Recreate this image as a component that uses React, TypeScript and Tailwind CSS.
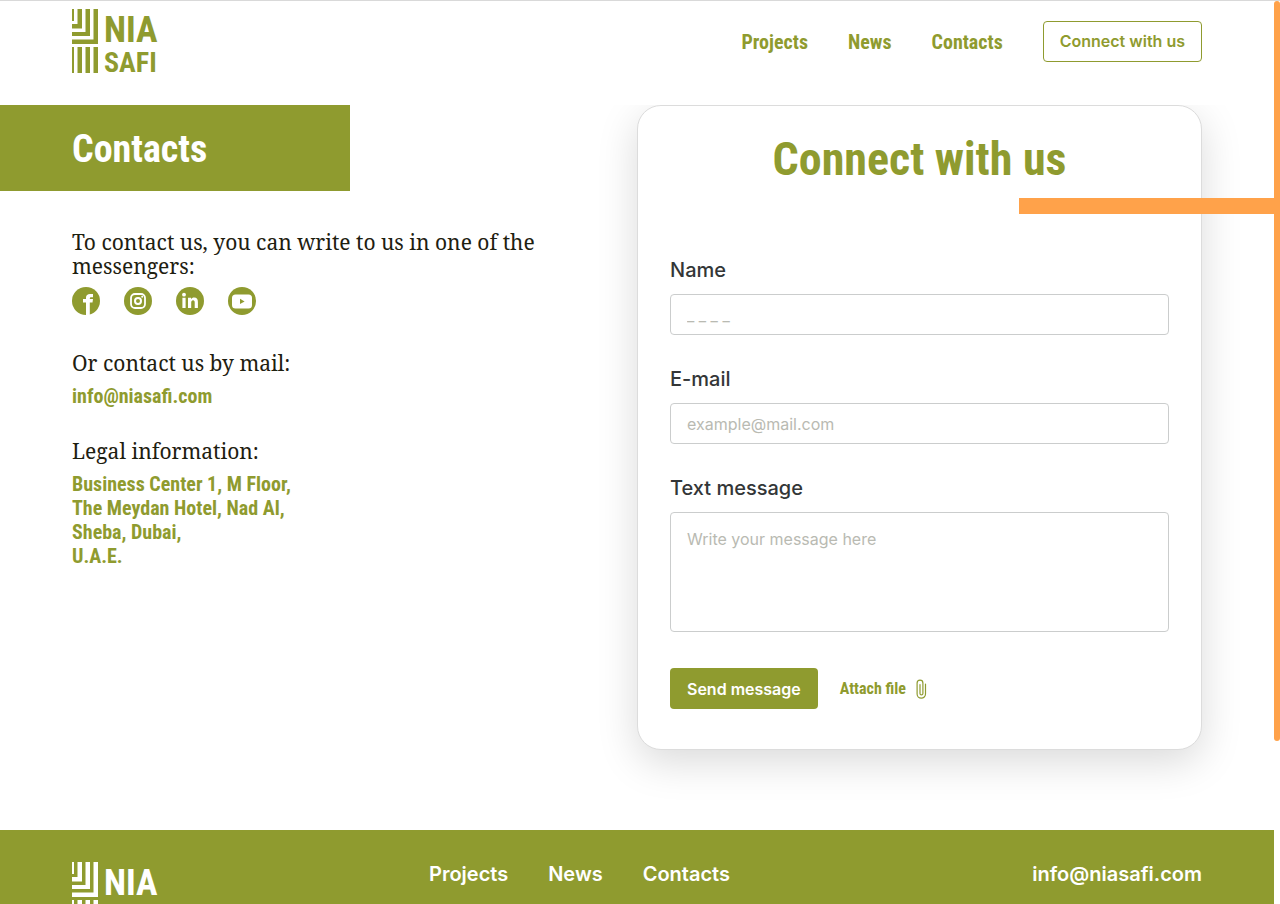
import type { ReactNode } from "react";

const LINKS = ["Projects", "News", "Contacts"];

function Logo({ className }: { className: string }) {
  return (
    <svg
      viewBox="0 0 88 66"
      className={`h-[66px] w-[88px] shrink-0 fill-current font-['Roboto_Condensed','Liberation_Sans_Narrow',sans-serif] ${className}`}
      role="img"
      aria-label="Nia Safi"
    >
      <path d="M0 0H2V12H0ZM5.500 0H10V19.500H0V15H5.500ZM13.500 0H18V27H0V23H13.500ZM21.500 0H26V35H0V30.500H21.500Z" />
      <path d="M0 38H2V64H0ZM5.500 38H10V64H5.500ZM13.500 38H18V64H13.500ZM21.500 38H26V64H21.500Z" />
      <text x="32" y="33" fontSize="36" fontWeight="700">
        NIA
      </text>
      <text x="32" y="63" fontSize="28" fontWeight="700">
        SAFI
      </text>
    </svg>
  );
}

function Social({ label, children }: { label: string; children: ReactNode }) {
  return (
    <a href="#" aria-label={label}>
      <svg viewBox="0 0 28 28" className="size-7">
        <circle cx="14" cy="14" r="14" fill="#8f9b2f" />
        {children}
      </svg>
    </a>
  );
}

function Field({ id, label, children }: { id: string; label: string; children: ReactNode }) {
  return (
    <div className="flex flex-col gap-3">
      <label htmlFor={id} className="text-xl leading-6 font-medium text-[#333637]">
        {label}
      </label>
      {children}
    </div>
  );
}

export default function App() {
  return (
    <div className="flex h-screen overflow-hidden border-t border-[#d9d9d9] bg-white font-['Inter',sans-serif]">
      <div className="flex-1 overflow-y-auto [scrollbar-width:none]">
        <header className="flex items-start justify-between px-[72px] pt-2 pb-[30px] font-['Roboto_Condensed','Liberation_Sans_Narrow',sans-serif]">
          <Logo className="text-[#8f9b2f]" />
          <nav className="flex items-center gap-10 pt-3">
            {LINKS.map((link) => (
              <a key={link} href="#" className="text-xl font-bold text-[#8f9b2f]">
                {link}
              </a>
            ))}
            <button className="rounded-[4px] border border-[#8f9b2f] px-4 py-2 font-['Inter',sans-serif] text-base leading-[23px] font-semibold text-[#8f9b2f]">
              Connect with us
            </button>
          </nav>
        </header>

        <main className="relative grid grid-cols-2 items-start overflow-hidden px-[72px] pb-20">
          <section className="pr-20 font-['Roboto_Condensed','Liberation_Sans_Narrow',sans-serif] text-xl leading-6 font-bold text-[#8f9b2f]">
            <h1 className="-ml-[72px] w-[350px] bg-[#8f9b2f] pt-5 pb-[18px] pl-[72px] text-[38px] leading-12 text-white">
              Contacts
            </h1>
            <h2 className="mt-[39px] font-['Noto_Serif','Liberation_Serif',serif] text-[21px] leading-6 font-normal text-[#1e2010]">
              To contact us, you can write to us in one of the messengers:
            </h2>
            <div className="mt-[9px] flex gap-6">
              <Social label="Facebook">
                <path
                  d="M14 28V15.5h-3V12h3v-1.400C14 8.2 15.6 7 18 7h3v3.300h-1.700c-1 0-1.500.5-1.500 1.400V12H21l-.5 3.500h-2.700V28z"
                  fill="white"
                />
              </Social>
              <Social label="Instagram">
                <rect x="7" y="7" width="14" height="14" rx="4" fill="none" stroke="white" strokeWidth="1.8" />
                <circle cx="14" cy="14" r="3" fill="none" stroke="white" strokeWidth="2" />
                <circle cx="18.2" cy="9.8" r="1" fill="white" />
              </Social>
              <Social label="LinkedIn">
                <circle cx="8" cy="7.7" r="1.9" fill="white" />
                <path
                  d="M6.4 10.8h3.200V21H6.400zM12 10.800h3v1.400c.6-1 1.700-1.700 3.200-1.700 2.700 0 3.700 1.700 3.700 4.400V21h-3.200v-5.400c0-1.400-.4-2.300-1.600-2.300-1.300 0-1.900 1-1.900 2.400V21H12z"
                  fill="white"
                />
              </Social>
              <Social label="YouTube">
                <rect x="4" y="7.5" width="20" height="14" rx="3.5" fill="white" />
                <path d="M12 11.800l4.600 2.600-4.600 2.600z" fill="#8f9b2f" />
              </Social>
            </div>
            <h2 className="mt-9 font-['Noto_Serif','Liberation_Serif',serif] text-[21px] leading-6 font-normal text-[#1e2010]">
              Or contact us by mail:
            </h2>
            <a href="#" className="mt-[9px] block">
              info@niasafi.com
            </a>
            <h2 className="mt-[31px] font-['Noto_Serif','Liberation_Serif',serif] text-[21px] leading-6 font-normal text-[#1e2010]">
              Legal information:
            </h2>
            <address className="mt-[9px] not-italic">
              Business Center 1, M Floor,
              <br />
              The Meydan Hotel, Nad Al,
              <br />
              Sheba, Dubai,
              <br />
              U.A.E.
            </address>
          </section>

          <form className="rounded-3xl border border-[#dcdcdc] bg-white px-8 pb-10 shadow-[0_12px_40px_rgba(0,0,0,0.15)]">
            <h2 className="pt-[25px] text-center font-['Roboto_Condensed','Liberation_Sans_Narrow',sans-serif] text-[46px] leading-14 font-bold text-[#8f9b2f]">
              Connect with us
            </h2>
            <div className="mt-[71px] flex flex-col gap-8">
              <Field id="name" label="Name">
                <input
                  id="name"
                  placeholder="_ _ _ _"
                  className="h-[41px] w-full rounded-[4px] border border-[#cbcdcd] px-4 text-base placeholder:text-[#b9bab2]"
                />
              </Field>
              <Field id="email" label="E-mail">
                <input
                  id="email"
                  type="email"
                  placeholder="example@mail.com"
                  className="h-[41px] w-full rounded-[4px] border border-[#cbcdcd] px-4 text-base placeholder:text-[#b9bab2]"
                />
              </Field>
              <Field id="message" label="Text message">
                <textarea
                  id="message"
                  placeholder="Write your message here"
                  className="h-[120px] w-full resize-none rounded-[4px] border border-[#cbcdcd] px-4 py-[14px] text-base placeholder:text-[#b9bab2]"
                />
              </Field>
            </div>
            <div className="mt-9 flex items-center gap-[22px]">
              <button
                type="button"
                className="h-[41px] rounded-[4px] bg-[#8f9b2f] px-[17px] text-base font-semibold text-white"
              >
                Send message
              </button>
              <button
                type="button"
                className="flex items-center gap-2 font-['Roboto_Condensed','Liberation_Sans_Narrow',sans-serif] text-base font-bold text-[#8f9b2f]"
              >
                Attach file
                <svg viewBox="0 0 14 20" className="h-5 w-[14px] fill-none stroke-current" strokeWidth="1.2" strokeLinecap="round">
                  <path d="M11.500 5v10a4.200 4.200 0 0 1-8.400 0V4a2.800 2.800 0 0 1 5.800 0v10.500a1.400 1.400 0 0 1-2.900 0V5.500" />
                </svg>
              </button>
            </div>
          </form>

          <div className="absolute top-[93px] right-0 h-4 w-1/5 bg-[#ffa24a]" />
        </main>

        <footer className="grid min-h-[273px] grid-cols-[357px_1fr_auto] items-start bg-[#8f9b2f] px-[72px] pt-8 text-xl leading-6 font-semibold text-white">
          <Logo className="text-white" />
          <nav className="flex gap-10">
            {LINKS.map((link) => (
              <a key={link} href="#">
                {link}
              </a>
            ))}
          </nav>
          <a href="#">info@niasafi.com</a>
        </footer>
      </div>
      <div className="w-[6px] shrink-0">
        <div className="h-[82%] rounded-[3px] bg-[#ffa24a]" />
      </div>
    </div>
  );
}
